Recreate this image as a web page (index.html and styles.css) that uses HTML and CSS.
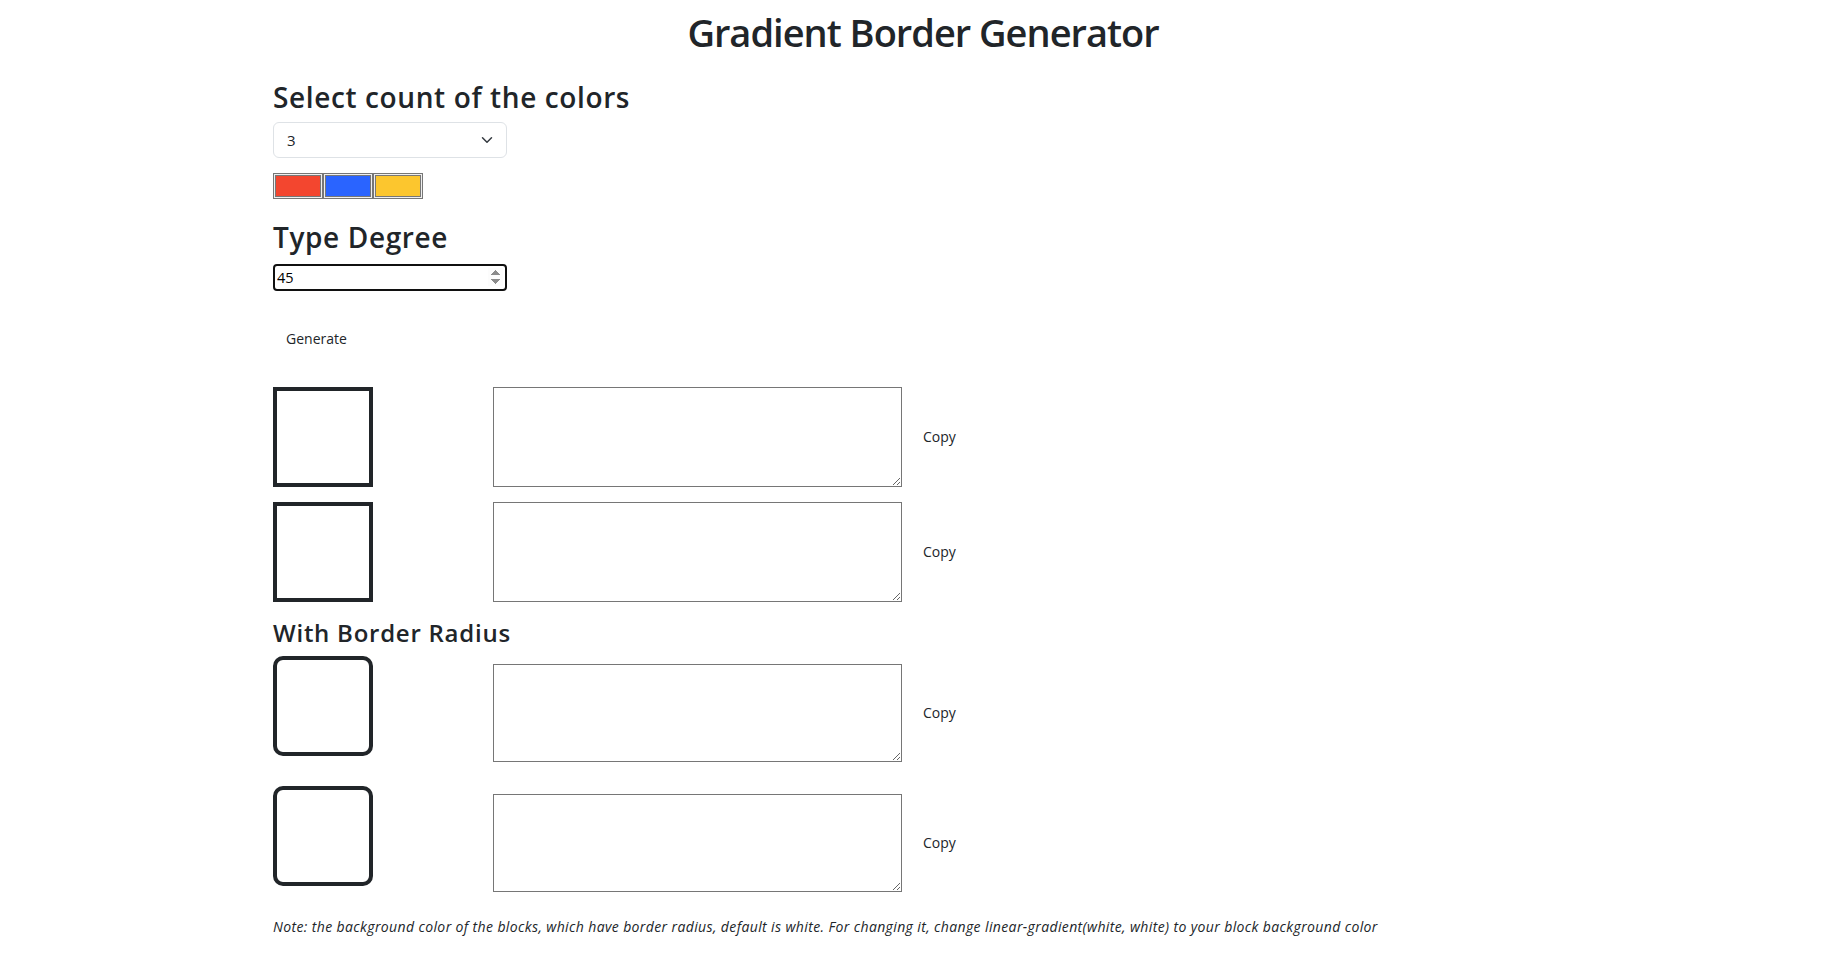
FILE: index.html
```html
<!DOCTYPE html>
<html lang="en">
<head>
<meta charset="utf-8">
<title>Gradient Border Generator</title>
<link rel="stylesheet" href="styles.css">
</head>
<body>
<div class="container">
  <h1 class="title">Gradient Border Generator</h1>

  <h3 class="section-title">Select count of the colors</h3>
  <div class="select-wrap">
    <select class="count-select">
      <option>2</option>
      <option selected>3</option>
      <option>4</option>
      <option>5</option>
    </select>
    <svg class="chevron" viewBox="0 0 16 16" width="16" height="12" aria-hidden="true">
      <path d="m2 5 6 6 6-6" fill="none" stroke="#343a40" stroke-width="2" stroke-linecap="round" stroke-linejoin="round"/>
    </svg>
  </div>

  <div class="colors">
    <input type="color" class="color" value="#f3462f">
    <input type="color" class="color" value="#2a64ff">
    <input type="color" class="color" value="#fcc62e">
  </div>

  <h3 class="section-title degree-title">Type Degree</h3>
  <input type="number" class="degree" value="45">

  <button class="btn generate">Generate</button>

  <div class="result-row">
    <div class="box"></div>
    <textarea class="code"></textarea>
    <button class="btn copy">Copy</button>
  </div>
  <div class="result-row">
    <div class="box"></div>
    <textarea class="code"></textarea>
    <button class="btn copy">Copy</button>
  </div>

  <h4 class="radius-title">With Border Radius</h4>

  <div class="result-row rounded-row">
    <div class="box rounded"></div>
    <textarea class="code short"></textarea>
    <button class="btn copy">Copy</button>
  </div>
  <div class="result-row rounded-row">
    <div class="box rounded"></div>
    <textarea class="code short"></textarea>
    <button class="btn copy">Copy</button>
  </div>

  <p class="note"><i>Note: the background color of the blocks, which have border radius, default is white. For changing it, change linear-gradient(white, white) to your block background color</i></p>
</div>
</body>
</html>
```

FILE: styles.css
```css
* {
  box-sizing: border-box;
}

body {
  margin: 0;
  font-family: "Open Sans", "Noto Sans", sans-serif;
  font-size: 16px;
  line-height: 1.5;
  color: #212529;
  background: #fff;
}

.container {
  width: 1300px;
  margin: 0 auto;
  padding-top: 8px;
}

.title {
  margin: 0 0 24px;
  font-size: 38px;
  font-weight: 600;
  line-height: 48px;
  text-align: center;
  letter-spacing: -1px;
}

.section-title {
  margin: 0 0 8px;
  font-size: 28px;
  font-weight: 600;
  line-height: 34px;
  letter-spacing: 0.62px;
}

.degree-title {
  margin-bottom: 10px;
}

.select-wrap {
  position: relative;
  width: 234px;
  height: 36px;
  margin-bottom: 15px;
}

.count-select {
  appearance: none;
  -webkit-appearance: none;
  display: block;
  width: 100%;
  height: 100%;
  padding: 0 36px 0 13px;
  font-family: inherit;
  font-size: 15px;
  color: #212529;
  background: #fff;
  border: 1px solid #dee2e6;
  border-radius: 6px;
}

.chevron {
  position: absolute;
  right: 12px;
  top: 12px;
  pointer-events: none;
}

.colors {
  display: flex;
  height: 26px;
  margin-bottom: 21px;
}

.color {
  -webkit-appearance: none;
  appearance: none;
  width: 50px;
  height: 26px;
  margin: 0;
  padding: 1px;
  border: 1px solid #767676;
  background: #efefef;
}

.color::-webkit-color-swatch-wrapper {
  padding: 0;
}

.color::-webkit-color-swatch {
  border: 1px solid #777;
  border-radius: 0;
}

.degree {
  display: block;
  width: 234px;
  height: 27px;
  margin: 0;
  padding: 0 2px;
  font-family: inherit;
  font-size: 14.5px;
  color: #000;
  border: 2px solid #101010;
  border-radius: 4px;
  outline: none;
}

.degree::-webkit-inner-spin-button {
  opacity: 1;
}

.btn {
  display: inline-block;
  padding: 6px 12px;
  font-family: inherit;
  font-size: 14px;
  line-height: 24px;
  color: #212529;
  background: transparent;
  border: 1px solid transparent;
  border-radius: 6px;
  cursor: pointer;
}

.generate {
  display: block;
  margin: 29px 0 29px;
}

.result-row {
  display: flex;
  align-items: center;
  margin-bottom: 15px;
}

.box {
  flex: none;
  width: 100px;
  height: 100px;
  margin-right: 120px;
  border: 4px solid #212529;
}

.box.rounded {
  border-radius: 10px;
  margin-bottom: 14px;
}

.rounded-row {
  margin-bottom: 16px;
}

.code {
  flex: none;
  width: 409px;
  height: 100px;
  margin: 0;
  padding: 2px;
  border: 1px solid #767676;
  resize: vertical;
  font-family: "Liberation Mono", monospace;
}

.code.short {
  height: 98px;
}

.copy {
  margin-left: 8px;
}

.radius-title {
  margin: 16px 0 9px;
  font-size: 24px;
  font-weight: 600;
  line-height: 29px;
  letter-spacing: 0.75px;
}

.note {
  margin: 15px 0 0;
  font-size: 14px;
  line-height: 21px;
  letter-spacing: 0.38px;
}
```
